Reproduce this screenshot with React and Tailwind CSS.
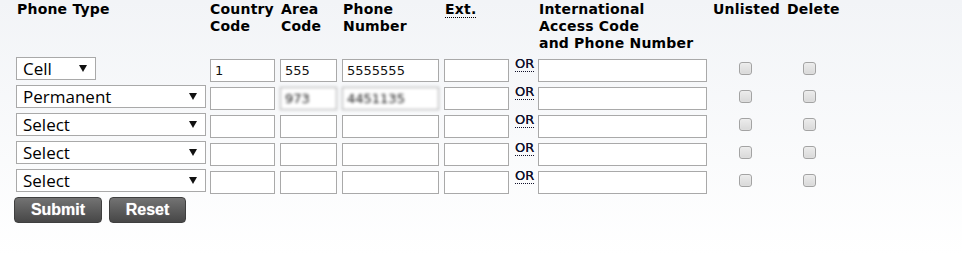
import React from 'react';

const rows = [
  { type: 'Cell', narrow: true, country: '1', area: '555', phone: '5555555' },
  { type: 'Permanent', country: '', area: '973', phone: '4451135', blurred: true },
  { type: 'Select', country: '', area: '', phone: '' },
  { type: 'Select', country: '', area: '', phone: '' },
  { type: 'Select', country: '', area: '', phone: '' },
];

const inputCls =
  "h-[23px] border border-[#a9a9a9] bg-white px-[4px] text-[13px] text-[#111] font-['DejaVu_Sans',sans-serif] outline-none";

const checkCls =
  'appearance-none w-[13px] h-[13px] rounded-[3px] border border-[#a3a3a3] bg-gradient-to-b from-[#ececec] to-[#d9d9d9] shadow-[inset_0_0_1px_#fff]';

const Arrow = () => (
  <svg
    className="pointer-events-none absolute right-[9px] top-[8px]"
    width="8"
    height="7"
    viewBox="0 0 8 7"
  >
    <path d="M0 0 H8 L4 7 Z" fill="#111" />
  </svg>
);

const PhoneRow = ({ row }) => (
  <div className="flex items-start h-[23px]">
    {/* Phone type */}
    <div className="w-[194px] shrink-0">
      <div className={`relative h-[23px] ${row.narrow ? 'w-[80px]' : 'w-[190px]'}`}>
        <select
          defaultValue={row.type}
          className="appearance-none w-full h-full border border-[#a9a9a9] bg-white pl-[6px] text-[17px] leading-[21px] text-black font-['Open_Sans',sans-serif] outline-none"
        >
          <option>{row.type}</option>
        </select>
        <Arrow />
      </div>
    </div>

    {/* Country / area / phone / ext */}
    <div className="w-[70px] shrink-0">
      <input className={`${inputCls} w-[65px]`} defaultValue={row.country} />
    </div>
    <div className="w-[62px] shrink-0">
      <input
        className={`${inputCls} w-[57px] ${row.blurred ? 'text-[#8a8a8a] blur-[1.5px] bg-[#fbfbfb]' : ''}`}
        defaultValue={row.area}
      />
    </div>
    <div className="w-[102px] shrink-0">
      <input
        className={`${inputCls} w-[97px] ${row.blurred ? 'text-[#8a8a8a] blur-[1.5px] bg-[#fbfbfb]' : ''}`}
        defaultValue={row.phone}
      />
    </div>
    <div className="w-[71px] shrink-0">
      <input className={`${inputCls} w-[65px]`} defaultValue="" />
    </div>

    {/* OR */}
    <div className="w-[23px] shrink-0 -mt-[1px] leading-[13px]">
      <abbr
        title="Enter either a local number or an international number"
        className="text-[13px] leading-[13px] text-[#10102a] no-underline border-b border-dotted border-[#10102a] font-['DejaVu_Sans',sans-serif] [text-shadow:0_0_0.4px_#10102a]"
      >
        OR
      </abbr>
    </div>

    {/* International */}
    <div className="w-[175px] shrink-0">
      <input className={`${inputCls} w-[169px]`} defaultValue="" />
    </div>

    {/* Unlisted / Delete */}
    <div className="w-[74px] shrink-0 pl-[26px] pt-[5px] flex">
      <input type="checkbox" className={checkCls} />
    </div>
    <div className="w-[60px] shrink-0 pl-[16px] pt-[5px] flex">
      <input type="checkbox" className={checkCls} />
    </div>
  </div>
);

const headCls =
  "shrink-0 text-[14px] leading-[17px] tracking-[0.2px] font-bold text-black font-['DejaVu_Sans',sans-serif]";

export default function App() {
  return (
    <div className="w-[962px] h-[256px] bg-gradient-to-b from-[#f2f4f7] to-[#ffffff] pl-[16px] pt-[1px]">
      {/* Header */}
      <div className="flex items-start h-[51px]">
        <div className={`${headCls} w-[194px] pl-[1px]`}>Phone Type</div>
        <div className={`${headCls} w-[70px]`}>Country<br />Code</div>
        <div className={`${headCls} w-[62px] pl-[1px]`}>Area<br />Code</div>
        <div className={`${headCls} w-[102px] pl-[1px]`}>Phone<br />Number</div>
        <div className={`${headCls} w-[71px] pl-[1px]`}>
          <abbr title="Extension" className="no-underline border-b border-dotted border-black">Ext.</abbr>
        </div>
        <div className={`${headCls} w-[23px]`}></div>
        <div className={`${headCls} w-[175px] pl-[1px]`}>International<br />Access Code<br />and Phone Number</div>
        <div className={`${headCls} w-[74px]`}>Unlisted</div>
        <div className={headCls}>Delete</div>
      </div>

      {/* Rows */}
      <div className="flex flex-col gap-[5px] mt-[5px]">
        {rows.map((row, i) => (
          <PhoneRow key={i} row={row} />
        ))}
      </div>

      {/* Buttons */}
      <div className="flex gap-[7px] mt-[5px] -ml-[2px]">
        <button
          type="submit"
          className="w-[88px] h-[26px] rounded-[4px] border border-[#3f3f3f] bg-gradient-to-b from-[#737373] to-[#474747] text-white text-[16px] font-bold font-['Liberation_Sans',Arial,sans-serif] [text-shadow:0_0_1px_rgba(255,255,255,0.6)]"
        >
          Submit
        </button>
        <button
          type="reset"
          className="w-[77px] h-[26px] rounded-[4px] border border-[#3f3f3f] bg-gradient-to-b from-[#737373] to-[#474747] text-white text-[16px] font-bold font-['Liberation_Sans',Arial,sans-serif] [text-shadow:0_0_1px_rgba(255,255,255,0.6)]"
        >
          Reset
        </button>
      </div>
    </div>
  );
}
